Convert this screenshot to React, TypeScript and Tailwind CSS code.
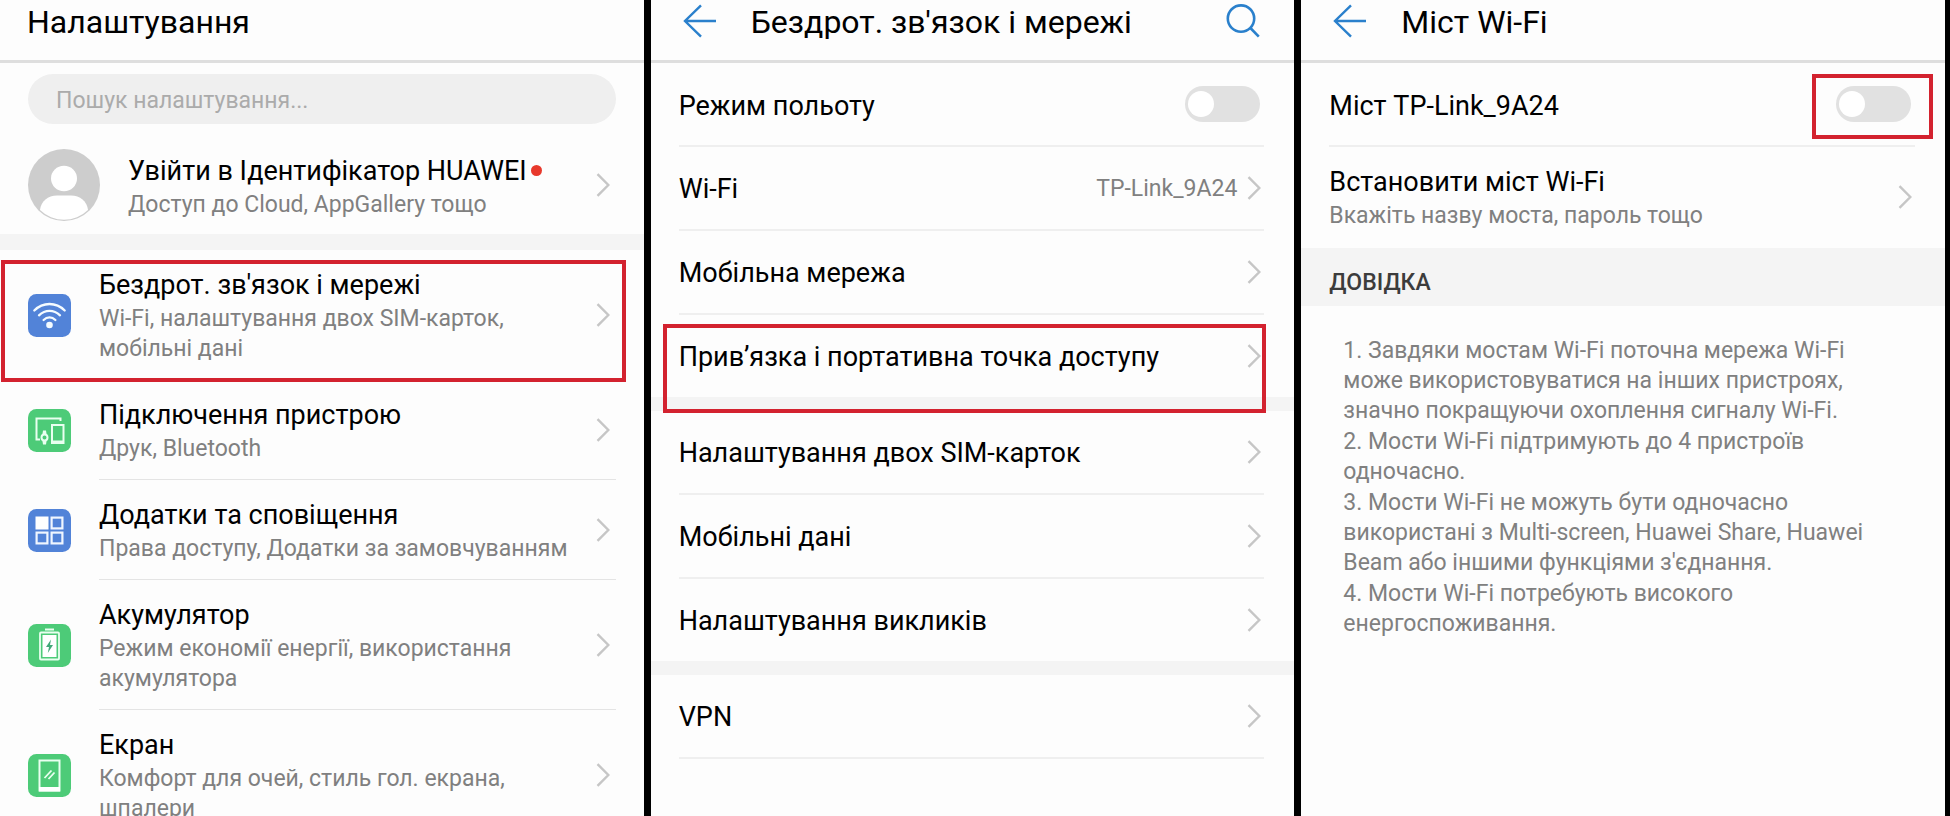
import type { ReactNode } from "react";

function Chevron() {
  return (
    <svg viewBox="0 0 14 24" className="h-6 w-3.5 shrink-0" fill="none" stroke="#c6c6c6" strokeWidth="2.4" aria-hidden="true">
      <path d="M1.5 1.2 12.3 12 1.5 22.8" />
    </svg>
  );
}

function BackArrow() {
  return (
    <svg viewBox="0 0 34 34" className="size-[34px]" fill="none" stroke="#2a80cc" strokeWidth="2.4" aria-hidden="true">
      <path d="M18 1.3 2 17l16 15.7M2 17h31" />
    </svg>
  );
}

function SearchGlyph() {
  return (
    <svg viewBox="0 0 34 34" className="size-[34px]" fill="none" stroke="#2a80cc" strokeWidth="2.6" aria-hidden="true">
      <circle cx="15" cy="14.6" r="13.2" />
      <path d="m24.4 24 8.4 8.6" />
    </svg>
  );
}

function Avatar() {
  return (
    <svg viewBox="0 0 72 72" className="size-[72px] shrink-0" aria-hidden="true">
      <circle cx="36" cy="36" r="36" fill="#cdcdcd" />
      <ellipse cx="36" cy="29.5" rx="13" ry="12.7" fill="#fff" />
      <path d="M12 61C13 52 20 46.500 29 46.500h14c9 0 16 5.500 17 14.500A34.500 34.500 0 0 1 12 61Z" fill="#fff" />
    </svg>
  );
}

function AppIcon({ fill, children }: { fill: string; children: ReactNode }) {
  return (
    <svg viewBox="0 0 43 43" className="size-[43px] shrink-0" fill="none" aria-hidden="true">
      <rect width="43" height="43" rx="8.500" fill={fill} />
      {children}
    </svg>
  );
}

const BLUE = "#5283d8";
const GREEN = "#4dcb78";

const wifiIcon = (
  <AppIcon fill={BLUE}>
    <g stroke="#f4fbff" strokeWidth="2.300" strokeLinecap="round">
      <path d="M6.300 16.500C15 7.800 28 7.800 36.700 16.500" />
      <path d="M11 21.300c6.200-6 14.800-6 21 0" />
      <path d="M15.600 26c3.500-3.400 8.300-3.400 11.800 0" />
    </g>
    <circle cx="21.500" cy="31" r="3.300" fill="#f4fbff" />
  </AppIcon>
);

const devicesIcon = (
  <AppIcon fill={GREEN}>
    <g stroke="#e9fff0" strokeWidth="2">
      <path d="M12 30.500H8.500V9.500H32.500V12" />
      <rect x="24" y="16" width="11.500" height="18" />
      <circle cx="16.500" cy="28.500" r="3" />
    </g>
    <path d="M24 31.500h11.500V35H24ZM15 21.500h3l.700 4.500h-4.400ZM14.300 31h4.400L18 35.500h-3Z" fill="#e9fff0" />
  </AppIcon>
);

const appsIcon = (
  <AppIcon fill={BLUE}>
    <rect x="7.500" y="7.500" width="13" height="13" fill="#fff" />
    <g stroke="#f0f6ff" strokeWidth="2.200">
      <rect x="23.600" y="8.600" width="10.800" height="10.800" />
      <rect x="8.600" y="23.600" width="10.800" height="10.800" />
      <rect x="23.600" y="23.600" width="10.800" height="10.800" />
    </g>
  </AppIcon>
);

const batteryIcon = (
  <AppIcon fill={GREEN}>
    <path d="M17 4.500h9v2h-9Z" fill="#e9fff0" />
    <rect x="12" y="8.500" width="19" height="27" rx="1" stroke="#e9fff0" strokeWidth="1.800" />
    <rect x="14.500" y="11" width="14" height="22" fill="#fff" />
    <path d="m23 15.500-5 7.500h3l-1.200 6 5.200-8h-3Z" fill="#41a878" />
  </AppIcon>
);

const displayIcon = (
  <AppIcon fill={GREEN}>
    <rect x="11.500" y="6.500" width="20" height="30" stroke="#e9fff0" strokeWidth="2" />
    <path d="M11 33h21v4.500H11Z" fill="#fff" />
    <path d="m16.500 24 7-7.500m-3 8.500 6-6.500" stroke="#e9fff0" strokeWidth="1.800" />
  </AppIcon>
);

const categories = [
  { icon: wifiIcon, title: "Бездрот. зв'язок і мережі", note: "Wi-Fi, налаштування двох SIM-карток, мобільні дані", marked: true },
  { icon: devicesIcon, title: "Підключення пристрою", note: "Друк, Bluetooth" },
  { icon: appsIcon, title: "Додатки та сповіщення", note: "Права доступу, Додатки за замовчуванням" },
  { icon: batteryIcon, title: "Акумулятор", note: "Режим економії енергії, використання акумулятора" },
  { icon: displayIcon, title: "Екран", note: "Комфорт для очей, стиль гол. екрана, шпалери" },
];

const networkGroups: { title: string; value?: string; marked?: boolean; divided?: boolean }[][] = [
  [
    { title: "Wi-Fi", value: "TP-Link_9A24" },
    { title: "Мобільна мережа" },
    { title: "Прив’язка і портативна точка доступу", marked: true },
  ],
  [{ title: "Налаштування двох SIM-карток" }, { title: "Мобільні дані" }, { title: "Налаштування викликів" }],
  [{ title: "VPN", divided: true }],
];

const helpItems = [
  "1. Завдяки мостам Wi-Fi поточна мережа Wi-Fi може використовуватися на інших пристроях, значно покращуючи охоплення сигналу Wi-Fi.",
  "2. Мости Wi-Fi підтримують до 4 пристроїв одночасно.",
  "3. Мости Wi-Fi не можуть бути одночасно використані з Multi-screen, Huawei Share, Huawei Beam або іншими функціями з'єднання.",
  "4. Мости Wi-Fi потребують високого енергоспоживання.",
];

function Panel({ title, back, search, children }: { title: string; back?: boolean; search?: boolean; children: ReactNode }) {
  return (
    <section className="min-w-0 flex-1 overflow-x-hidden overflow-y-auto bg-[#fdfdfd] [scrollbar-width:none]">
      <header className="flex items-center border-b-3 border-[#dedede] pr-[34px] pb-[18px] pl-[27px] pt-0.5">
        {back && (
          <button type="button" aria-label="Назад" className="-my-2 mr-[34px] ml-[5px] pb-[3px]">
            <BackArrow />
          </button>
        )}
        <h1 className="flex-1 text-[32px] leading-10 text-black">{title}</h1>
        {search && (
          <button type="button" aria-label="Пошук" className="-my-2 pb-[3px]">
            <SearchGlyph />
          </button>
        )}
      </header>
      {children}
    </section>
  );
}

function TitleNote({ title, note, dot }: { title: string; note: string; dot?: boolean }) {
  return (
    <span className="flex min-w-0 flex-1 flex-col gap-0.5 pt-[18px] pr-2 pb-[15px]">
      <span className="flex items-center gap-1 text-[27px] leading-[34px] text-black">
        {title}
        {dot && <span className="size-[11px] rounded-full bg-[#e8392c]" />}
      </span>
      <span className="text-[23px] leading-[30px] text-[#808080]">{note}</span>
    </span>
  );
}

function ToggleRow({ id, label, marked }: { id: string; label: string; marked?: boolean }) {
  return (
    <div className="mr-[30px] ml-7 flex h-[84px] items-center justify-between border-b-2 border-[#efefef] pr-1">
      <label htmlFor={id} className="pt-[3px] text-[27px] leading-8 text-black">
        {label}
      </label>
      <span className="relative flex">
        <input
          id={id}
          type="checkbox"
          role="switch"
          className="flex h-9 w-[75px] appearance-none items-center rounded-full bg-[#e1e1e1] px-[3px] before:size-[26px] before:rounded-full before:bg-white checked:justify-end checked:bg-[#2a80cc]"
        />
        {marked && <span className="pointer-events-none absolute -top-3 -right-[22px] -bottom-[17px] -left-6 border-4 border-[#d3222f]" />}
      </span>
    </div>
  );
}

function SettingsPanel() {
  return (
    <Panel title="Налаштування">
      <div className="mx-7 mt-[11px] mb-3">
        <input
          type="search"
          aria-label="Пошук налаштування"
          placeholder="Пошук налаштування..."
          className="block h-[50px] w-full rounded-full bg-[#efefef] px-7 pt-0.5 text-[23px] text-black placeholder:text-[#ababab]"
        />
      </div>
      <a href="#account" className="flex h-[98px] items-center pr-[34px] pl-7">
        <Avatar />
        <span className="ml-7 flex flex-1">
          <TitleNote title="Увійти в Ідентифікатор HUAWEI" note="Доступ до Cloud, AppGallery тощо" dot />
        </span>
        <Chevron />
      </a>
      <div className="h-4 bg-[#f4f4f4]" />
      <ul>
        {categories.map((item) => (
          <li key={item.title} className="relative">
            <a href="#category" className="flex items-center pr-7 pl-7">
              {item.icon}
              <span className="ml-7 flex flex-1 items-center border-b border-[#e4e4e4] pr-1.5">
                <TitleNote title={item.title} note={item.note} />
                <Chevron />
              </span>
            </a>
            {item.marked && (
              <span className="pointer-events-none absolute top-2.5 right-[18px] -bottom-0.5 left-px z-10 border-4 border-[#d3222f]" />
            )}
          </li>
        ))}
      </ul>
    </Panel>
  );
}

function NetworksPanel() {
  return (
    <Panel title="Бездрот. зв'язок і мережі" back search>
      <ToggleRow id="flight" label="Режим польоту" />
      {networkGroups.map((group, index) => (
        <div key={index}>
          {index > 0 && <div className="h-3.5 bg-[#f4f4f4]" />}
          <ul>
            {group.map((row, i) => (
              <li key={row.title} className="relative">
                <a
                  href="#network"
                  className={
                    i < group.length - 1 || row.divided
                      ? "mr-[30px] ml-7 flex h-[84px] items-center border-b-2 border-[#efefef] pr-[3px]"
                      : "mr-[30px] ml-7 flex h-[82px] items-center pr-[3px]"
                  }
                >
                  <span className="flex-1 pt-0.5 text-[27px] leading-8 text-black">{row.title}</span>
                  {row.value && <span className="mr-2.5 pt-0.5 text-[23px] leading-8 text-[#808080]">{row.value}</span>}
                  <Chevron />
                </a>
                {row.marked && (
                  <span className="pointer-events-none absolute top-[9px] right-7 -bottom-4 left-3 z-10 border-4 border-[#d3222f]" />
                )}
              </li>
            ))}
          </ul>
        </div>
      ))}
    </Panel>
  );
}

function BridgePanel() {
  return (
    <Panel title="Міст Wi-Fi" back>
      <ToggleRow id="bridge" label="Міст TP-Link_9A24" marked />
      <a href="#bridge-setup" className="flex items-center pr-[33px] pb-0.5 pl-7">
        <TitleNote title="Встановити міст Wi-Fi" note="Вкажіть назву моста, пароль тощо" />
        <Chevron />
      </a>
      <h2 className="bg-[#f4f4f4] pt-5 pb-2 pl-7 text-[23px] leading-[30px] font-medium text-[#3c3c3c]">ДОВІДКА</h2>
      <div className="flex flex-col gap-px pt-[30px] pr-11 pl-[42px] text-[23px] leading-[30px] text-[#808080]">
        {helpItems.map((text) => (
          <p key={text}>{text}</p>
        ))}
      </div>
    </Panel>
  );
}

export default function App() {
  return (
    <main className="flex h-screen gap-[7px] bg-black pr-[5px] font-['Roboto',sans-serif]">
      <SettingsPanel />
      <NetworksPanel />
      <BridgePanel />
    </main>
  );
}
